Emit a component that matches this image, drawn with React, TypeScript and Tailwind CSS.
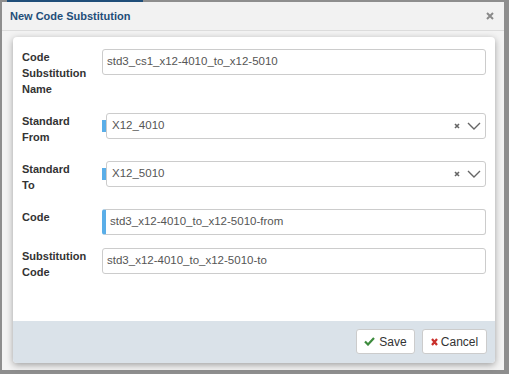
import React from "react";

const font = { fontFamily: '"Liberation Sans", Arial, sans-serif' };

function Label({ lines }: { lines: string[] }) {
  return (
    <div className="w-[80px] shrink-0 text-[11px] font-bold leading-[16px] text-[#333]">
      {lines.map((l) => (
        <div key={l}>{l}</div>
      ))}
    </div>
  );
}

function TextInput({ value, marked }: { value: string; marked?: boolean }) {
  return (
    <div
      className={`flex h-[26px] flex-1 items-center rounded-[3px] border border-[#ccc] bg-white pl-[4px] text-[11.5px] text-[#555] ${
        marked ? "border-l-[4px] border-l-[#5aaee8] pl-[4px]" : ""
      }`}
    >
      {value}
    </div>
  );
}

function SelectBox({ value }: { value: string }) {
  return (
    <div className="flex flex-1 items-center">
      <div className="h-[12px] w-[4px] shrink-0 bg-[#5aaee8]" />
      <div className="flex h-[26px] flex-1 items-center rounded-[3px] border border-[#ccc] bg-white pl-[5px] pr-[4px] text-[11.5px] text-[#555]">
        <span className="flex-1">{value}</span>
        <svg width="6" height="6" viewBox="0 0 6 6" className="mr-[7px]">
          <path d="M1 1 L5 5 M5 1 L1 5" fill="none" stroke="#666" strokeWidth="1.6" />
        </svg>
        <svg width="14" height="8" viewBox="0 0 14 8">
          <path d="M1 1 L7 7 L13 1" fill="none" stroke="#666" strokeWidth="1.4" />
        </svg>
      </div>
    </div>
  );
}

export default function App() {
  return (
    <div className="relative h-[374px] w-[509px] overflow-hidden bg-[#8e8e8e]" style={font}>
      {/* backdrop tab strip */}
      <div className="absolute left-[7px] top-0 h-[2px] w-[136px] bg-[#1f4e79]" />

      <div className="absolute left-[2px] top-[2px] flex h-[368px] w-[502px] flex-col bg-[#f3f3f3]">
        {/* title bar */}
        <div className="flex h-[29px] shrink-0 items-center justify-between border-b border-[#dcdcdc] bg-[#f2f2f2] pl-[8px] pr-[10px]">
          <span className="text-[11px] font-bold text-[#1f4e79]">New Code Substitution</span>
          <svg width="8" height="8" viewBox="0 0 8 8">
            <path d="M1 1 L7 7 M7 1 L1 7" fill="none" stroke="#8a8a8a" strokeWidth="2" />
          </svg>
        </div>

        {/* card */}
        <div className="ml-[11px] mt-[6px] flex w-[482px] flex-1 flex-col overflow-hidden rounded-[4px] bg-white shadow-[0_2px_7px_rgba(0,0,0,0.35)]">
          <div className="flex-1 px-[9px] pt-[12px]">
            <div className="flex items-start">
              <Label lines={["Code", "Substitution", "Name"]} />
              <TextInput value="std3_cs1_x12-4010_to_x12-5010" />
            </div>
            <div className="mt-[16px] flex items-start">
              <Label lines={["Standard", "From"]} />
              <SelectBox value="X12_4010" />
            </div>
            <div className="mt-[16px] flex items-start">
              <Label lines={["Standard", "To"]} />
              <SelectBox value="X12_5010" />
            </div>
            <div className="mt-[16px] flex items-start">
              <Label lines={["Code"]} />
              <TextInput value="std3_x12-4010_to_x12-5010-from" marked />
            </div>
            <div className="mt-[13px] flex items-start">
              <Label lines={["Substitution", "Code"]} />
              <TextInput value="std3_x12-4010_to_x12-5010-to" />
            </div>
          </div>

          {/* footer */}
          <div className="flex h-[42px] shrink-0 items-start justify-end gap-[7px] bg-[#dae2e9] pr-[8px] pt-[8px]">
            <button className="flex h-[25px] w-[59px] items-center justify-center gap-[4px] rounded-[3px] border border-[#ccc] bg-white text-[12px] text-[#333]">
              <svg width="11" height="9" viewBox="0 0 11 9">
                <path d="M1 4.5 L4 7.5 L10 1" fill="none" stroke="#3d8b3d" strokeWidth="2.2" />
              </svg>
              Save
            </button>
            <button className="flex h-[25px] w-[65px] items-center justify-center gap-[3px] rounded-[3px] border border-[#ccc] bg-white text-[12px] text-[#333]">
              <svg width="7" height="8" viewBox="0 0 7 8">
                <path d="M1 1 L6 7 M6 1 L1 7" fill="none" stroke="#c9302c" strokeWidth="2.2" />
              </svg>
              Cancel
            </button>
          </div>
        </div>
        <div className="h-[7px] shrink-0" />
      </div>
    </div>
  );
}
